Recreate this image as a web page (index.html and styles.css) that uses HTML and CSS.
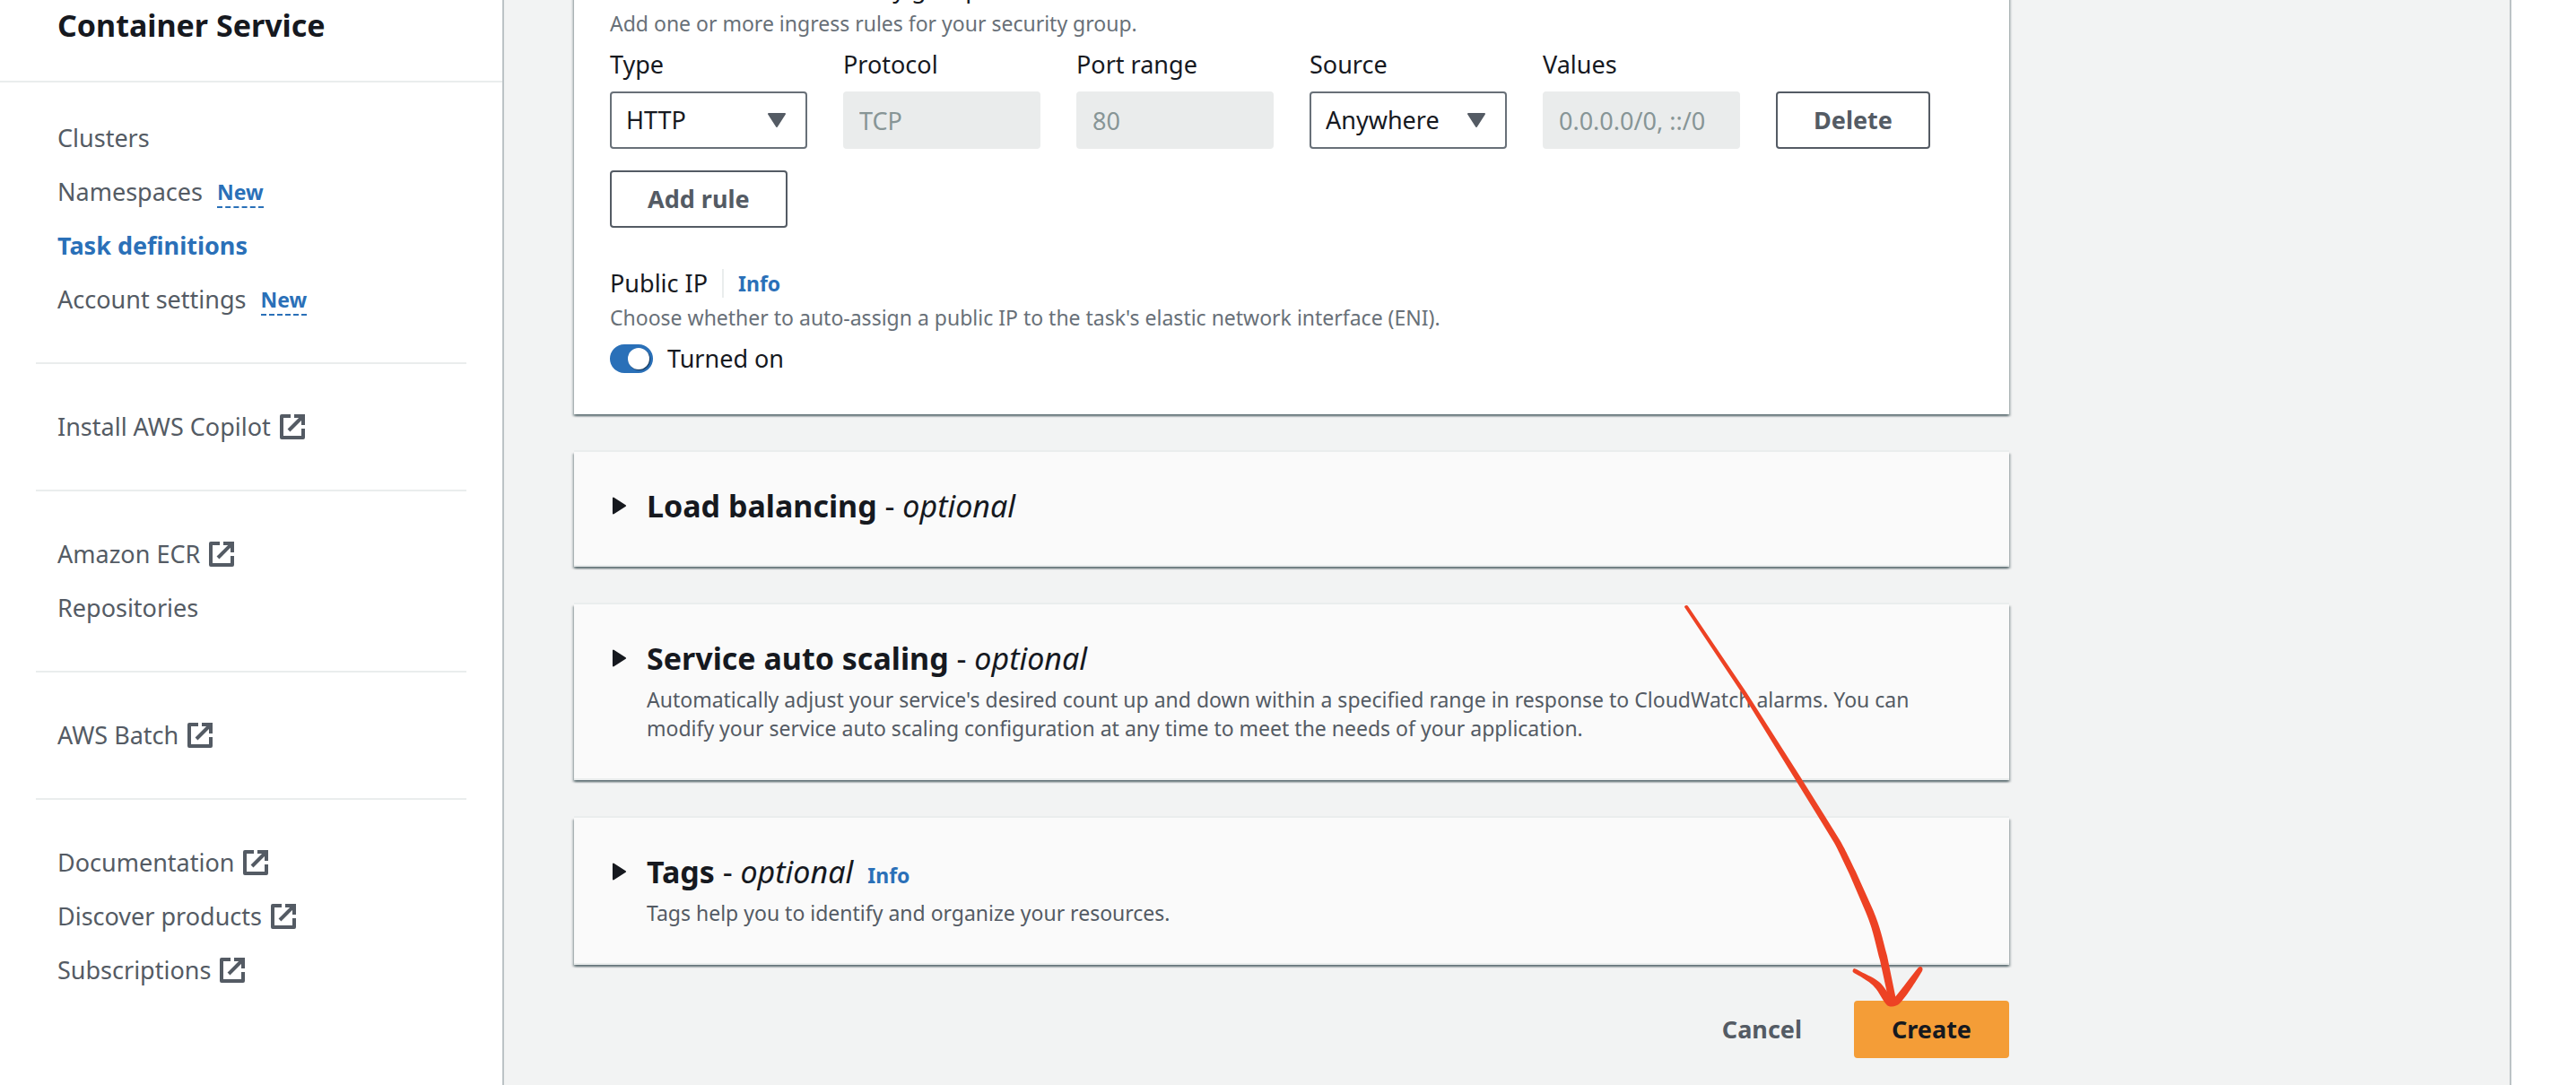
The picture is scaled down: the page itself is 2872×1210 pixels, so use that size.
FILE: index.html
```html
<!DOCTYPE html>
<html lang="en">
<head>
<meta charset="utf-8">
<meta name="viewport" content="width=device-width, initial-scale=1">
<title>Amazon Elastic Container Service</title>
<link rel="stylesheet" href="styles.css">
</head>
<body>
<svg class="sprite" aria-hidden="true">
  <symbol id="external" viewBox="0 0 28 28">
    <path d="M12 2H2V26H26V16M16 2H26V12" fill="none" stroke="currentColor" stroke-width="4" stroke-linejoin="round"/>
    <path d="M10 18L25 3" fill="none" stroke="currentColor" stroke-width="4"/>
    <path d="M18 0H28V10Z" fill="currentColor"/>
  </symbol>
  <symbol id="caret-right" viewBox="0 0 18 22">
    <path d="M2 2V20L16 11Z" fill="currentColor" stroke="currentColor" stroke-width="2" stroke-linejoin="round"/>
  </symbol>
  <symbol id="caret-down" viewBox="0 0 20 16">
    <path d="M1 1H19L10 15Z" fill="currentColor" stroke="currentColor" stroke-width="2" stroke-linejoin="round"/>
  </symbol>
</svg>
<div class="app">
  <aside class="sidebar">
    <header class="sidebar-header"><h1>Container Service</h1></header>
    <nav class="nav" aria-label="Service navigation">
      <ul>
        <li><a href="#">Clusters</a></li>
        <li><a href="#">Namespaces</a><a class="new" href="#">New</a></li>
        <li><a class="active" href="#" aria-current="page">Task definitions</a></li>
        <li><a href="#">Account settings</a><a class="new" href="#">New</a></li>
      </ul>
      <ul>
        <li><a href="#">Install AWS Copilot<svg class="external"><use href="#external"/></svg></a></li>
      </ul>
      <ul>
        <li><a href="#">Amazon ECR<svg class="external"><use href="#external"/></svg></a></li>
        <li><a href="#">Repositories</a></li>
      </ul>
      <ul>
        <li><a href="#">AWS Batch<svg class="external"><use href="#external"/></svg></a></li>
      </ul>
      <ul>
        <li><a href="#">Documentation<svg class="external"><use href="#external"/></svg></a></li>
        <li><a href="#">Discover products<svg class="external"><use href="#external"/></svg></a></li>
        <li><a href="#">Subscriptions<svg class="external"><use href="#external"/></svg></a></li>
      </ul>
    </nav>
  </aside>

  <main class="main">
    <form class="content">
      <section class="card networking">
        <h3>Inbound rules for security groups</h3>
        <p class="hint">Add one or more ingress rules for your security group.</p>
        <div class="rule">
          <div class="field">
            <label for="type">Type</label>
            <div class="select"><select id="type"><option>HTTP</option></select><svg><use href="#caret-down"/></svg></div>
          </div>
          <div class="field">
            <label for="protocol">Protocol</label>
            <input id="protocol" type="text" value="TCP" disabled>
          </div>
          <div class="field">
            <label for="port">Port range</label>
            <input id="port" type="text" value="80" disabled>
          </div>
          <div class="field">
            <label for="source">Source</label>
            <div class="select"><select id="source"><option>Anywhere</option></select><svg><use href="#caret-down"/></svg></div>
          </div>
          <div class="field">
            <label for="values">Values</label>
            <input id="values" type="text" value="0.0.0.0/0, ::/0" disabled>
          </div>
          <button class="button" type="button">Delete</button>
        </div>
        <button class="button" type="button">Add rule</button>
        <div class="public-ip">
          <h3>Public IP</h3>
          <a class="info" href="#">Info</a>
        </div>
        <p class="hint">Choose whether to auto-assign a public IP to the task's elastic network interface (ENI).</p>
        <label class="toggle"><input type="checkbox" role="switch" checked>Turned on</label>
      </section>

      <section class="card expandable">
        <svg class="caret"><use href="#caret-right"/></svg>
        <div><h2>Load balancing <em>- <i>optional</i></em></h2></div>
      </section>

      <section class="card expandable">
        <svg class="caret"><use href="#caret-right"/></svg>
        <div>
          <h2>Service auto scaling <em>- <i>optional</i></em></h2>
          <p>Automatically adjust your service's desired count up and down within a specified range in response to CloudWatch alarms. You can modify your service auto scaling configuration at any time to meet the needs of your application.</p>
        </div>
      </section>

      <section class="card expandable">
        <svg class="caret"><use href="#caret-right"/></svg>
        <div>
          <h2>Tags <em>- <i>optional</i></em><a class="info" href="#">Info</a></h2>
          <p>Tags help you to identify and organize your resources.</p>
        </div>
      </section>

      <div class="actions">
        <button class="button link" type="button">Cancel</button>
        <button class="button primary" type="submit">Create</button>
      </div>

      <svg class="arrow" viewBox="0 0 270 456" aria-hidden="true">
        <path d="M0 3C0 1 3 0 4 2L69 98L129 192L172 261C177 269 181 277 191 298L209 338C218 358 220 370 226 392L236 441C236 446 230 448 228 443L218 397C211 370 210 362 202 343L184 301C175 282 171 273 167 266L124 196L66 102Z"/>
        <path d="M189 406C187 408 187 410 189 411C200 417 208 422 212 427C217 432 220 440 225 446C228 450 236 449 240 445C246 439 258 421 265 409C267 405 263 402 260 406C250 418 238 435 233 440C228 436 223 426 217 421C210 415 200 412 192 407Z"/>
      </svg>
    </form>
  </main>
  <aside class="tools"></aside>
</div>
</body>
</html>
```
FILE: styles.css
```css
* {
  box-sizing: border-box;
}

body {
  margin: 0;
  background: #fff;
  color: #16191f;
  font: 27px/40px "Noto Sans", "Open Sans", sans-serif;
}

h1, h2, h3, p, ul {
  margin: 0;
  padding: 0;
}

a {
  color: inherit;
  text-decoration: none;
}

.sprite {
  display: none;
}

.app {
  display: grid;
  grid-template-columns: 562px 1fr 72px;
  height: 100vh;
  overflow: hidden;
}

/* Side navigation */

.sidebar {
  border-right: 2px solid #bcc3c6;
}

.sidebar-header {
  padding: 4px 64px 38px;
  border-bottom: 2px solid #eaeded;
}

h1 {
  font-size: 34px;
  line-height: 48px;
}

.nav {
  padding: 0 40px;
  color: #545b64;
}

.nav ul {
  display: flex;
  flex-direction: column;
  gap: 20px;
  padding: 50px 24px;
  list-style: none;
}

.nav ul:first-child {
  padding-top: 42px;
}

.nav ul + ul {
  border-top: 2px solid #eaeded;
}

.nav li {
  display: flex;
  align-items: center;
  gap: 16px;
}

.nav li > a {
  display: flex;
  align-items: center;
  gap: 10px;
}

.nav .active {
  color: #2a70b8;
  font-weight: 700;
}

.nav .new {
  margin-top: 2px;
  border-bottom: 2px dashed #2a70b8;
  color: #2a70b8;
  font-size: 23px;
  font-weight: 700;
  line-height: 32px;
}

.external {
  width: 28px;
  height: 28px;
}

/* Form */

.main {
  padding: 0 78px;
  border-right: 2px solid #bcc3c6;
  background: #f2f3f3;
}

.content {
  position: relative;
  display: flex;
  flex-direction: column;
  gap: 40px;
  max-width: 1600px;
}

.card {
  background: #fff;
  box-shadow: 0 2px 2px #001c2466, 2px 2px 2px #001c2433, -2px 2px 2px #001c2433, 0 -2px 0 #eaeded;
}

.networking {
  margin-top: -73px;
  padding: 40px 40px 42px;
}

h3 {
  font-size: 27px;
  font-weight: 400;
}

.hint {
  color: #687078;
  font-size: 23px;
  line-height: 32px;
}

.networking h3 + .hint {
  margin: 3px 0 10px;
}

.rule {
  display: grid;
  grid-template-columns: repeat(5, 220px) auto;
  justify-content: start;
  align-items: end;
  gap: 40px;
  margin-bottom: 24px;
}

.field {
  display: grid;
  gap: 10px;
}

.field input, .field select {
  width: 100%;
  height: 64px;
  margin: 0;
  padding: 0 16px;
  border: 2px solid #687078;
  border-radius: 4px;
  background: #fff;
  color: #16191f;
  font: inherit;
  appearance: none;
}

.field input:disabled {
  border-color: #eaecec;
  background: #eaecec;
  color: #879596;
}

.select {
  display: grid;
  align-items: center;
}

.select select, .select svg {
  grid-area: 1 / 1;
}

.select svg {
  justify-self: end;
  width: 20px;
  height: 16px;
  margin-right: 24px;
  color: #545b64;
  pointer-events: none;
}

.button {
  height: 64px;
  padding: 0 40px;
  border: 2px solid #545b64;
  border-radius: 4px;
  background: #fff;
  color: #545b64;
  font: inherit;
  font-weight: 700;
}

.public-ip {
  display: flex;
  align-items: center;
  margin: 42px 0 2px;
}

.info {
  color: #2a70b8;
  font-size: 23px;
  font-weight: 700;
  line-height: 32px;
}

.public-ip .info {
  margin-left: 16px;
  padding-left: 16px;
  border-left: 2px solid #eaeded;
}

.toggle {
  display: flex;
  align-items: center;
  gap: 16px;
  margin-top: 10px;
}

.toggle input {
  width: 48px;
  height: 32px;
  margin: 0;
  padding: 4px;
  border-radius: 16px;
  background: #2a70b8;
  appearance: none;
}

.toggle input::before {
  content: "";
  display: block;
  width: 24px;
  height: 24px;
  margin-left: auto;
  border-radius: 50%;
  background: #fff;
  box-shadow: 1px 1px 1px #00000080;
}

.expandable {
  display: flex;
  gap: 22px;
  min-height: 128px;
  margin-top: 2px;
  padding: 36px 82px 40px 42px;
  border-bottom: 2px solid #eaeded;
  background: #fafafa;
}

.caret {
  flex: none;
  width: 17px;
  height: 22px;
  margin-top: 13px;
}

h2 {
  font-size: 34px;
  line-height: 48px;
}

h2 em {
  font-style: normal;
  font-weight: 400;
}

h2 .info {
  margin-left: 16px;
}

.expandable p {
  margin-top: 6px;
  color: #545b64;
  font-size: 23px;
  line-height: 32px;
}

.actions {
  display: flex;
  justify-content: flex-end;
  gap: 16px;
}

.button.link {
  border-color: transparent;
  background: transparent;
}

.button.primary {
  border-color: #f49d37;
  background: #f49d37;
  color: #16191f;
}

/* Hand-drawn pointer to the Create button */
.arrow {
  position: absolute;
  right: 92px;
  bottom: 50px;
  width: 270px;
  height: 456px;
  fill: #ed4224;
  pointer-events: none;
}
```
